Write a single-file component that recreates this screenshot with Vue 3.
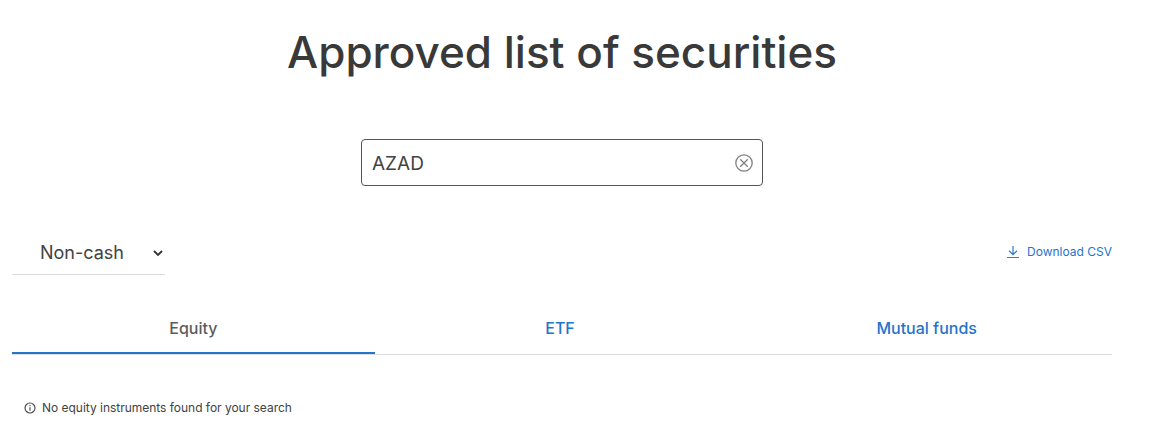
<template>
  <main class="page">
    <h1 class="title">Approved list of securities</h1>

    <div class="search">
      <input v-model="query" class="search-input" type="text" aria-label="Search" />
      <button class="clear-button" aria-label="Clear" @click="query = ''">
        <svg width="20" height="20" viewBox="0 0 20 20" fill="none" stroke="#808080" stroke-width="1.3">
          <circle cx="10" cy="10" r="8.2" />
          <path d="M6.2 6.2l7.6 7.6M13.8 6.2l-7.6 7.6" />
        </svg>
      </button>
    </div>

    <div class="toolbar">
      <button class="select">
        <span>Non-cash</span>
        <svg width="10" height="7" viewBox="0 0 10 7" fill="none" stroke="#333" stroke-width="1.8">
          <path d="M1 1l4 4 4-4" />
        </svg>
      </button>
      <a class="download">
        <svg width="12" height="12" viewBox="0 0 12 12" fill="none" stroke="#2f7acb" stroke-width="1.2">
          <path d="M6 0v8.5M2 4.8l4 3.8 4-3.8" />
          <path d="M0 11.5h12" stroke-width="1" />
        </svg>
        <span>Download CSV</span>
      </a>
    </div>

    <nav class="tabs">
      <a
        v-for="tab in tabs"
        :key="tab"
        class="tab"
        :class="{ active: tab === activeTab }"
        @click="activeTab = tab"
      >{{ tab }}</a>
    </nav>

    <p class="empty">
      <svg width="12" height="12" viewBox="0 0 12 12" fill="none" stroke="#505050" stroke-width="1.2">
        <circle cx="6" cy="6" r="5" />
        <path d="M6 5.2v3.5M6 3v1.2" />
      </svg>
      <span>No equity instruments found for your search</span>
    </p>
  </main>
</template>

<script setup>
import { ref } from 'vue';

const query = ref('AZAD');
const tabs = ['Equity', 'ETF', 'Mutual funds'];
const activeTab = ref('Equity');
</script>

<style>
body {
  background: #fff;
}
</style>

<style scoped>
.page {
  box-sizing: border-box;
  width: 1112px;
  height: 437px;
  padding: 26px 0 0 12px;
  overflow: hidden;
  font-family: Inter, sans-serif;
  color: #424242;
}

.title {
  margin: 0;
  font-size: 44px;
  line-height: 53px;
  font-weight: 500;
  text-align: center;
  color: #393939;
}

.search {
  display: flex;
  align-items: center;
  box-sizing: border-box;
  width: 402px;
  height: 47px;
  margin: 60px auto 0;
  padding: 0 8px 0 10px;
  border: 1px solid #555;
  border-radius: 4px;
}

.search-input {
  flex: 1;
  min-width: 0;
  padding: 2px 0 0;
  border: none;
  outline: none;
  font: 400 19px/24px Inter, sans-serif;
  color: #424242;
}

.clear-button {
  display: flex;
  padding: 0;
  border: none;
  background: none;
  cursor: pointer;
}

.toolbar {
  display: flex;
  justify-content: space-between;
  margin-top: 46px;
}

.select {
  display: flex;
  align-items: center;
  justify-content: space-between;
  box-sizing: border-box;
  width: 153px;
  height: 43px;
  padding: 0 2px 0 28px;
  border: none;
  border-bottom: 1px solid #ddd;
  background: none;
  font: 400 18px/24px Inter, sans-serif;
  color: #424242;
}

.download {
  display: flex;
  align-items: center;
  gap: 8px;
  height: 39px;
  font-size: 12px;
  color: #2474cb;
  cursor: pointer;
}

.tabs {
  display: flex;
  height: 51px;
  margin-top: 28px;
  border-bottom: 1px solid #ddd;
}

.tab {
  flex: 1;
  box-sizing: border-box;
  height: 51px;
  margin-right: 4px;
  font-size: 16px;
  line-height: 50px;
  font-weight: 500;
  text-align: center;
  color: #2474cb;
  cursor: pointer;
}

.tab.active {
  border-bottom: 2px solid #2474cb;
  color: #5c5c5c;
}

.empty {
  display: flex;
  align-items: center;
  gap: 6px;
  margin: 44px 0 0 12px;
  font-size: 12px;
  line-height: 18px;
  letter-spacing: -0.02px;
}
</style>
